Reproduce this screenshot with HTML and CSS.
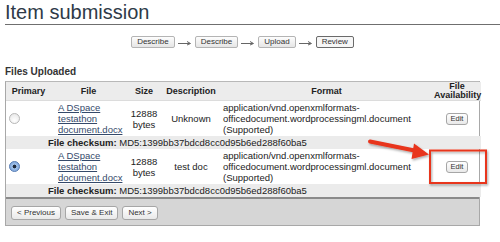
FILE: index.html
```html
<!DOCTYPE html>
<html lang="en">
<head>
    <meta charset="UTF-8">
    <title>Item submission</title>
    <link rel="stylesheet" href="styles.css">
</head>
<body>
    <h1 class="page-title">Item submission</h1>
    <div class="content">
        <div class="progress">
            <span class="step">Describe</span>
            <svg class="step-arrow" width="14" height="6" viewBox="0 0 14 6"><path d="M0 3.5H12M9 1.5L12.5 3.5L9 5" fill="none" stroke="#666" stroke-width="1"/></svg>
            <span class="step">Describe</span>
            <svg class="step-arrow" width="14" height="6" viewBox="0 0 14 6"><path d="M0 3.5H12M9 1.5L12.5 3.5L9 5" fill="none" stroke="#666" stroke-width="1"/></svg>
            <span class="step">Upload</span>
            <svg class="step-arrow" width="14" height="6" viewBox="0 0 14 6"><path d="M0 3.5H12M9 1.5L12.5 3.5L9 5" fill="none" stroke="#666" stroke-width="1"/></svg>
            <span class="step current">Review</span>
        </div>

        <h2 class="section-title">Files Uploaded</h2>

        <div class="files-box">
            <table class="files">
                <colgroup>
                    <col style="width: 45px">
                    <col style="width: 75px">
                    <col style="width: 36px">
                    <col style="width: 58px">
                    <col style="width: 213px">
                    <col style="width: 48px">
                </colgroup>
                <tr>
                    <th>Primary</th>
                    <th>File</th>
                    <th>Size</th>
                    <th>Description</th>
                    <th>Format</th>
                    <th>File Availability</th>
                </tr>
                <tr class="file-row">
                    <td><span class="radio"></span></td>
                    <td class="file-name"><a href="#">A DSpace testathon document.docx</a></td>
                    <td class="center">12888 bytes</td>
                    <td class="center">Unknown</td>
                    <td>application/vnd.openxmlformats-officedocument.wordprocessingml.document (Supported)</td>
                    <td class="center"><button class="small-btn">Edit</button></td>
                </tr>
                <tr class="checksum-row">
                    <td colspan="6"><b>File checksum:</b> MD5:1399bb37bdcd8cc0d95b6ed288f60ba5</td>
                </tr>
                <tr class="file-row">
                    <td><span class="radio checked"></span></td>
                    <td class="file-name"><a href="#">A DSpace testathon document.docx</a></td>
                    <td class="center">12888 bytes</td>
                    <td class="center">test doc</td>
                    <td>application/vnd.openxmlformats-officedocument.wordprocessingml.document (Supported)</td>
                    <td class="center"><button class="small-btn">Edit</button></td>
                </tr>
                <tr class="checksum-row">
                    <td colspan="6"><b>File checksum:</b> MD5:1399bb37bdcd8cc0d95b6ed288f60ba5</td>
                </tr>
            </table>
            <div class="actions">
                <button class="small-btn">&lt; Previous</button>
                <button class="small-btn">Save &amp; Exit</button>
                <button class="small-btn">Next &gt;</button>
            </div>
        </div>
    </div>

    <!-- annotation drawn over the screenshot -->
    <svg class="callout" width="500" height="242" viewBox="0 0 500 242">
        <defs>
            <filter id="shadow" x="-20%" y="-20%" width="140%" height="140%">
                <feDropShadow dx="1" dy="1.5" stdDeviation="1" flood-color="#000" flood-opacity="0.35"/>
            </filter>
        </defs>
        <g filter="url(#shadow)">
            <path d="M370 141.5L417 151" stroke="#e8341c" stroke-width="4" stroke-linecap="round"/>
            <path d="M429 154.5L414 143.5L411.5 159Z" fill="#e8341c"/>
            <rect x="430" y="150.5" width="56" height="32.5" fill="none" stroke="#e8341c" stroke-width="2"/>
        </g>
    </svg>
</body>
</html>
```

FILE: styles.css
```css
body {
    margin: 0;
    padding: 0 0 0 5px;
    background-color: white;
    color: #333;
    font-family: 'Liberation Sans', Arial, sans-serif;
    position: relative;
}
.page-title {
    margin: 0;
    padding-top: 1px;
    height: 23px;
    font-size: 20px;
    font-weight: normal;
    line-height: 22px;
    color: #2e3a48;
    border-bottom: 1px solid #6f6f6f;
}
.content {
    margin-right: 20px;
}

/* Schritte oben */
.progress {
    display: flex;
    justify-content: center;
    align-items: center;
    gap: 3px;
    margin-top: 11px;
}
.step {
    display: inline-block;
    height: 10px;
    padding: 0 5px;
    border: 1px solid #b4b4b4;
    border-radius: 2px;
    background: linear-gradient(#fdfdfd, #e6e6e6);
    font-size: 8px;
    line-height: 10px;
    color: #333;
}
.step.current {
    border-color: #6a6a6a;
    background: #f6f6f6;
}
.step-arrow {
    display: block;
    margin-top: 2px;
}

.section-title {
    margin: 18px 0 3px;
    font-size: 10px;
    line-height: 12px;
    color: #333;
}

.files-box {
    border: 1px solid #a8a8a8;
    border-top-color: #b8b8b8;
}
.files {
    width: 100%;
    table-layout: fixed;
    border-collapse: collapse;
    font-size: 9.5px;
    color: #222;
}
.files th {
    background-color: #ececec;
    padding: 0 1px;
    height: 18px;
    font-size: 9px;
    line-height: 9px;
    font-weight: bold;
    text-align: center;
    border-bottom: 1px solid #dcdcdc;
}
.files td {
    padding: 1px 3px;
    line-height: 11px;
    vertical-align: middle;
}
.files .center {
    text-align: center;
}
.files .file-name {
    padding-left: 7px;
    padding-right: 4px;
}
.file-name a {
    color: #34496a;
}
.checksum-row td {
    background-color: #ebebeb;
    padding: 1px 0 1px 42px;
    line-height: 11px;
}

.radio {
    display: block;
    width: 9px;
    height: 9px;
    border: 1px solid #b8b8b8;
    border-radius: 50%;
    background: radial-gradient(circle at 50% 70%, #ffffff, #e4e4e4);
}
.radio.checked {
    border-color: #5b7fb5;
    background: radial-gradient(circle, #1e2a3c 0 1.6px, #9fc0ea 2.2px, #6e9ad4);
}

.small-btn {
    height: 12px;
    padding: 0 4px;
    border: 1px solid #a6a6a6;
    border-radius: 3px;
    background: linear-gradient(#ffffff, #e9e9e9);
    font-family: 'Liberation Sans', Arial, sans-serif;
    font-size: 7.5px;
    line-height: 10px;
    color: #333;
}

.actions {
    display: flex;
    gap: 4px;
    padding: 7px 5px 5px;
    background-color: #d6d6d6;
    border-top: 2px solid #8a8a8a;
}
.actions .small-btn {
    height: 14px;
    padding: 0 5px;
    font-size: 8px;
}

.callout {
    position: absolute;
    top: 0;
    left: 0;
    pointer-events: none;
}
```
